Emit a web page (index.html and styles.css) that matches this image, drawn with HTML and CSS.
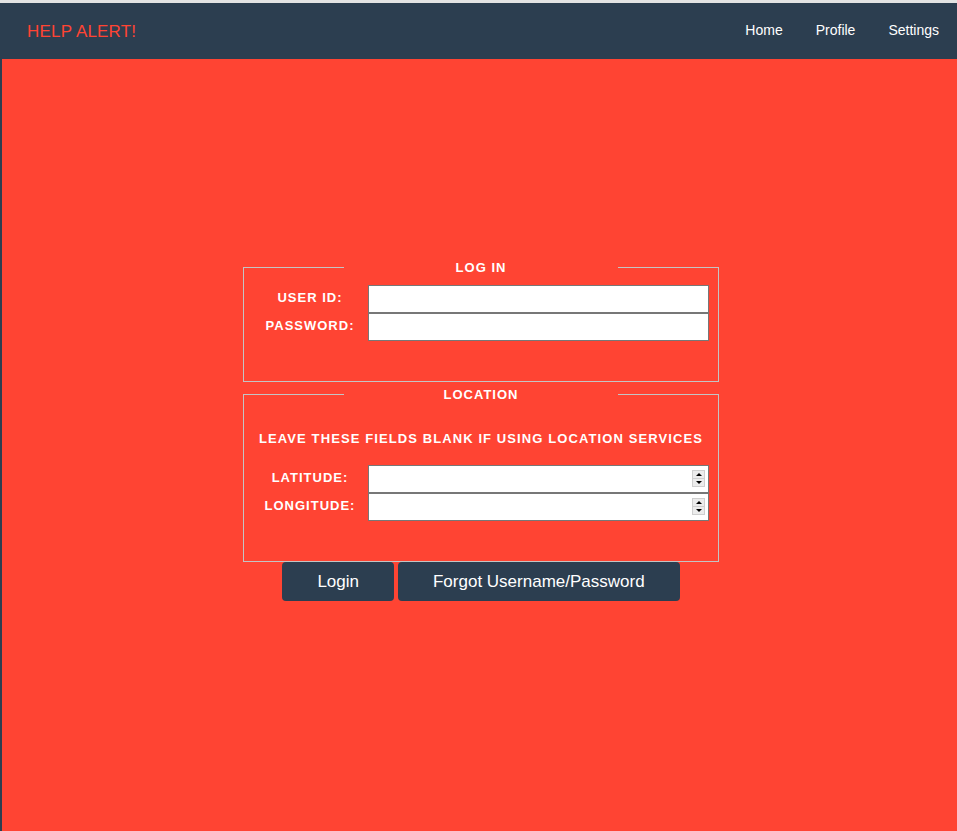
FILE: index.html
```html
<!DOCTYPE html>
<html lang="en">
<head>
<meta charset="utf-8">
<title>Help Alert - Log In</title>
<link rel="stylesheet" href="styles.css">
</head>
<body>
<div class="topline"></div>
<div class="page">
  <header class="navbar">
    <div class="brand">HELP ALERT!</div>
    <nav class="nav">
      <a href="#" class="nav-link">Home</a>
      <a href="#" class="nav-link">Profile</a>
      <a href="#" class="nav-link">Settings</a>
    </nav>
  </header>
  <main class="main">
    <form class="login" onsubmit="return false;">
      <fieldset class="box box-login">
        <legend class="legend">LOG IN</legend>
        <div class="grid">
          <label class="label" for="uid">USER ID:</label>
          <input class="field" id="uid" type="text">
          <label class="label" for="pwd">PASSWORD:</label>
          <input class="field" id="pwd" type="password">
        </div>
      </fieldset>
      <fieldset class="box box-location">
        <legend class="legend">LOCATION</legend>
        <p class="note">LEAVE THESE FIELDS BLANK IF USING LOCATION SERVICES</p>
        <div class="grid">
          <label class="label" for="lat">LATITUDE:</label>
          <div class="num">
            <input class="field" id="lat" type="number">
            <span class="spin"><span class="spin-up"></span><span class="spin-down"></span></span>
          </div>
          <label class="label" for="lon">LONGITUDE:</label>
          <div class="num">
            <input class="field" id="lon" type="number">
            <span class="spin"><span class="spin-up"></span><span class="spin-down"></span></span>
          </div>
        </div>
      </fieldset>
      <div class="buttons">
        <button class="btn" type="submit">Login</button>
        <button class="btn" type="button">Forgot Username/Password</button>
      </div>
    </form>
  </main>
</div>
</body>
</html>
```
FILE: styles.css
```css
html, body {
  margin: 0;
  padding: 0;
}
body {
  font-family: "Liberation Sans", Arial, sans-serif;
  background: #2c3e50;
  min-height: 831px;
}
.topline {
  height: 3px;
  background: #e3e3e3;
}
.page {
  background: #2c3e50;
}
.navbar {
  height: 56px;
  display: flex;
  align-items: center;
  justify-content: space-between;
  padding: 0 18px 0 27px;
}
.brand {
  color: #ff4433;
  font-size: 17px;
  letter-spacing: 0.2px;
  margin-top: 1px;
}
.nav {
  display: flex;
  gap: 33px;
}
.nav-link {
  color: #ffffff;
  font-size: 14px;
  text-decoration: none;
  margin-top: -2px;
}
.main {
  margin-left: 2px;
  padding-left: 3px;
  background: #ff4433;
  height: 772px;
  padding-top: 201px;
  box-sizing: border-box;
}
.login {
  width: 476px;
  margin: 0 auto;
}
.box {
  margin: 0;
  padding: 0 0 40px 0;
  border: 1px solid #c4c4c4;
  min-width: 0;
}
.box-location {
  margin-top: 5px;
}
.legend {
  width: 274px;
  margin: 0 auto;
  padding: 0;
  text-align: center;
  color: #ffffff;
  font-weight: bold;
  font-size: 13px;
  line-height: 15px;
  letter-spacing: 1px;
}
.grid {
  display: grid;
  grid-template-columns: 104px 341px;
  column-gap: 6px;
  padding-left: 14px;
  margin-top: 10px;
  align-items: center;
}
.box-location .grid {
  margin-top: 0;
}
.label {
  text-align: center;
  color: #ffffff;
  font-weight: bold;
  font-size: 13px;
  letter-spacing: 1px;
  margin-top: -4px;
}
.field {
  display: block;
  box-sizing: border-box;
  width: 341px;
  height: 28px;
  margin: 0;
  border: 1px solid #777777;
  background: #ffffff;
  padding: 0 4px;
  font-family: "Liberation Sans", Arial, sans-serif;
  font-size: 13px;
  -moz-appearance: textfield;
  appearance: textfield;
}
.field::-webkit-inner-spin-button,
.field::-webkit-outer-spin-button {
  -webkit-appearance: none;
  margin: 0;
}
.num {
  position: relative;
}
.spin {
  position: absolute;
  top: 5px;
  right: 4px;
  width: 13px;
  height: 17px;
  display: flex;
  flex-direction: column;
}
.spin-up,
.spin-down {
  flex: 1;
  background: #ececec;
  border: 1px solid #cfcfcf;
  position: relative;
}
.spin-down {
  border-top: none;
}
.spin-up::after,
.spin-down::after {
  content: "";
  position: absolute;
  left: 3px;
  width: 0;
  height: 0;
  border-left: 3px solid transparent;
  border-right: 3px solid transparent;
}
.spin-up::after {
  top: 2px;
  border-bottom: 3px solid #000000;
}
.spin-down::after {
  top: 2px;
  border-top: 3px solid #000000;
}
.note {
  margin: 29px 0 19px;
  text-align: center;
  color: #ffffff;
  font-weight: bold;
  font-size: 13px;
  line-height: 15px;
  letter-spacing: 1.1px;
}
.buttons {
  text-align: center;
  font-size: 0;
  margin-top: 0;
}
.btn {
  display: inline-block;
  height: 39px;
  padding: 0 35px;
  margin: 0 2px;
  background: #2c3e50;
  color: #ffffff;
  border: none;
  border-radius: 4px;
  font-family: "Liberation Sans", Arial, sans-serif;
  font-size: 17px;
  vertical-align: top;
  cursor: pointer;
}
```
